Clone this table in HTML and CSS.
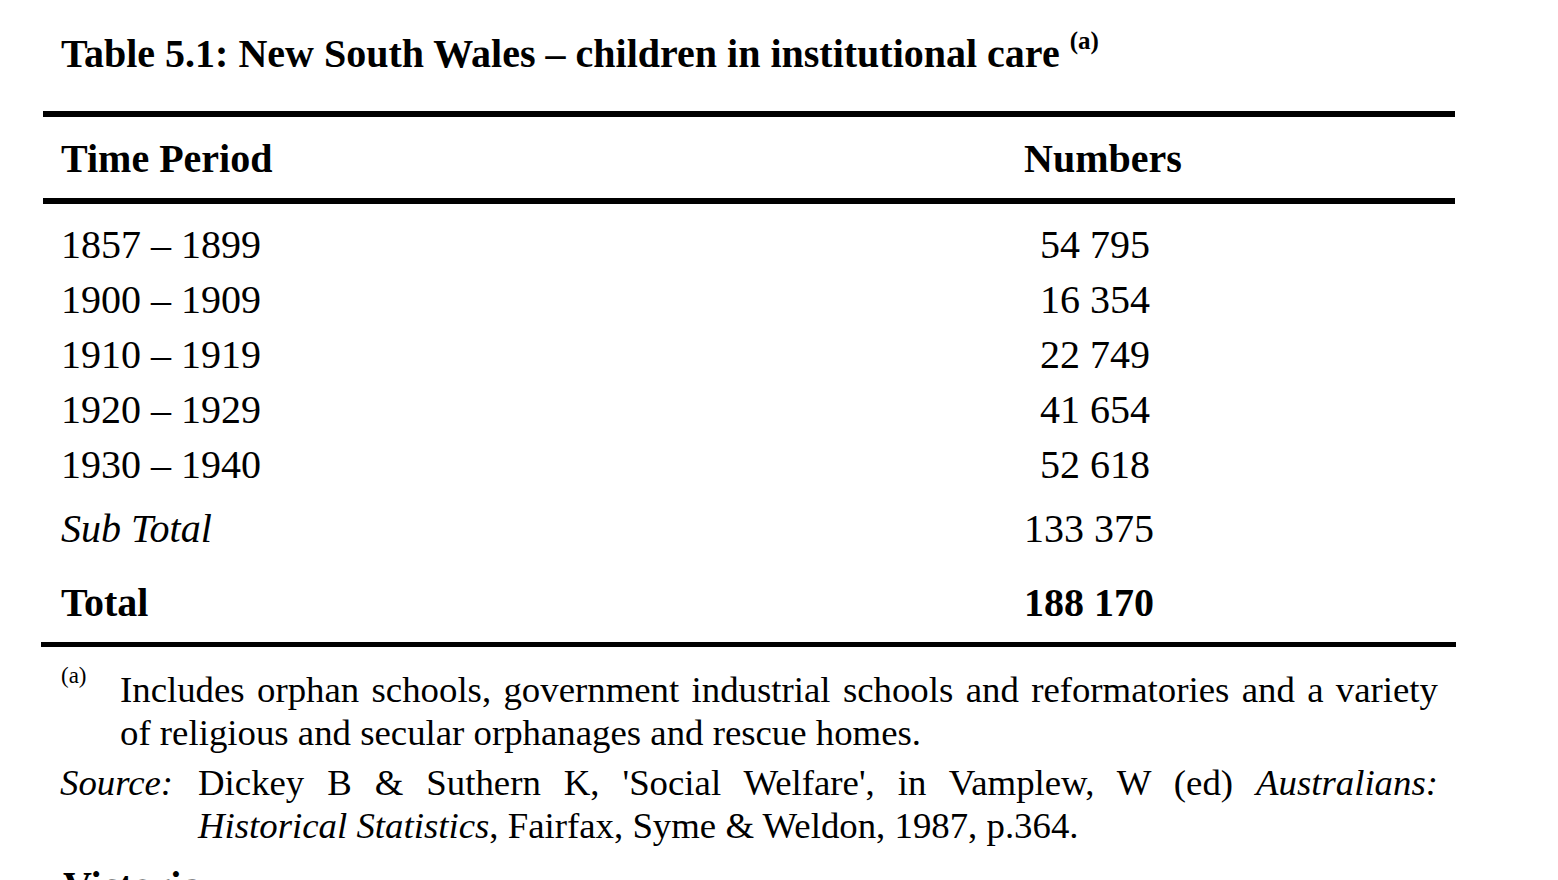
FILE: index.html
```html
<!DOCTYPE html>
<html lang="en">
<head>
<meta charset="utf-8">
<title>Table 5.1: New South Wales – children in institutional care</title>
<link rel="stylesheet" href="styles.css">
</head>
<body>
<div class="page">
  <h1 class="title">Table 5.1: New South Wales – children in institutional care <span class="sup">(a)</span></h1>

  <div class="table">
    <div class="rule"></div>
    <div class="row head">
      <div class="c1">Time Period</div>
      <div class="c2">Numbers</div>
    </div>
    <div class="rule"></div>
    <div class="tbody">
      <div class="row"><div class="c1">1857 – 1899</div><div class="c2 num">54 795</div></div>
      <div class="row"><div class="c1">1900 – 1909</div><div class="c2 num">16 354</div></div>
      <div class="row"><div class="c1">1910 – 1919</div><div class="c2 num">22 749</div></div>
      <div class="row"><div class="c1">1920 – 1929</div><div class="c2 num">41 654</div></div>
      <div class="row"><div class="c1">1930 – 1940</div><div class="c2 num">52 618</div></div>
      <div class="row sub"><div class="c1">Sub Total</div><div class="c2 num">133 375</div></div>
      <div class="row total"><div class="c1">Total</div><div class="c2 num">188 170</div></div>
    </div>
  </div>
  <div class="rule bottom"></div>

  <div class="note">
    <div class="marker">(a)</div>
    <p class="text">Includes orphan schools, government industrial schools and reformatories and a variety of religious and secular orphanages and rescue homes.</p>
  </div>

  <div class="source">
    <div class="label">Source:</div>
    <p class="text">Dickey B &amp; Suthern K, 'Social Welfare', in Vamplew, W (ed) <i>Australians:</i> <i>Historical Statistics</i>, Fairfax, Syme &amp; Weldon, 1987, p.364.</p>
  </div>

  <h2 class="next">Victoria</h2>
</div>
</body>
</html>
```

FILE: styles.css
```css
html {
  overflow: hidden;
  background: #ffffff;
}

body {
  margin: 0;
  background: #ffffff;
  color: #000000;
  font-family: "Liberation Serif", "Times New Roman", serif;
}

.page {
  padding-top: 30px;
}

.title {
  margin: 0 0 33px 61px;
  font-size: 40px;
  line-height: 48px;
  font-weight: bold;
  white-space: nowrap;
}

.sup {
  font-size: 25px;
  line-height: 0;
  vertical-align: 18px;
}

.table {
  margin-left: 43px;
  width: 1412px;
}

.rule {
  height: 6px;
  background: #000000;
}

.rule.bottom {
  height: 5px;
  width: 1415px;
  margin-left: 41px;
}

.row {
  display: grid;
  grid-template-columns: 963px 126px;
  padding-left: 18px;
  font-size: 40px;
  line-height: 55px;
  white-space: nowrap;
}

.head {
  font-weight: bold;
  line-height: 44px;
  padding-top: 19.5px;
  padding-bottom: 17.5px;
}

.tbody {
  padding-top: 13px;
  padding-bottom: 12.5px;
}

.num {
  text-align: right;
}

.sub {
  margin-top: 9px;
}

.sub .c1 {
  font-style: italic;
}

.total {
  margin-top: 18.5px;
  font-weight: bold;
}

.note {
  display: grid;
  grid-template-columns: 59px 1318px;
  margin: 21px 0 0 61px;
  font-size: 36.8px;
  line-height: 43px;
}

.marker {
  font-size: 23px;
  line-height: 15px;
}

.text {
  margin: 0;
  text-align: justify;
}

.source {
  display: grid;
  grid-template-columns: 138px 1240px;
  margin: 7px 0 0 60px;
  font-size: 36.8px;
  line-height: 43px;
}

.label {
  font-style: italic;
}

.next {
  margin: 15px 0 0 63px;
  font-size: 40px;
  line-height: 48px;
  font-weight: bold;
}
```
